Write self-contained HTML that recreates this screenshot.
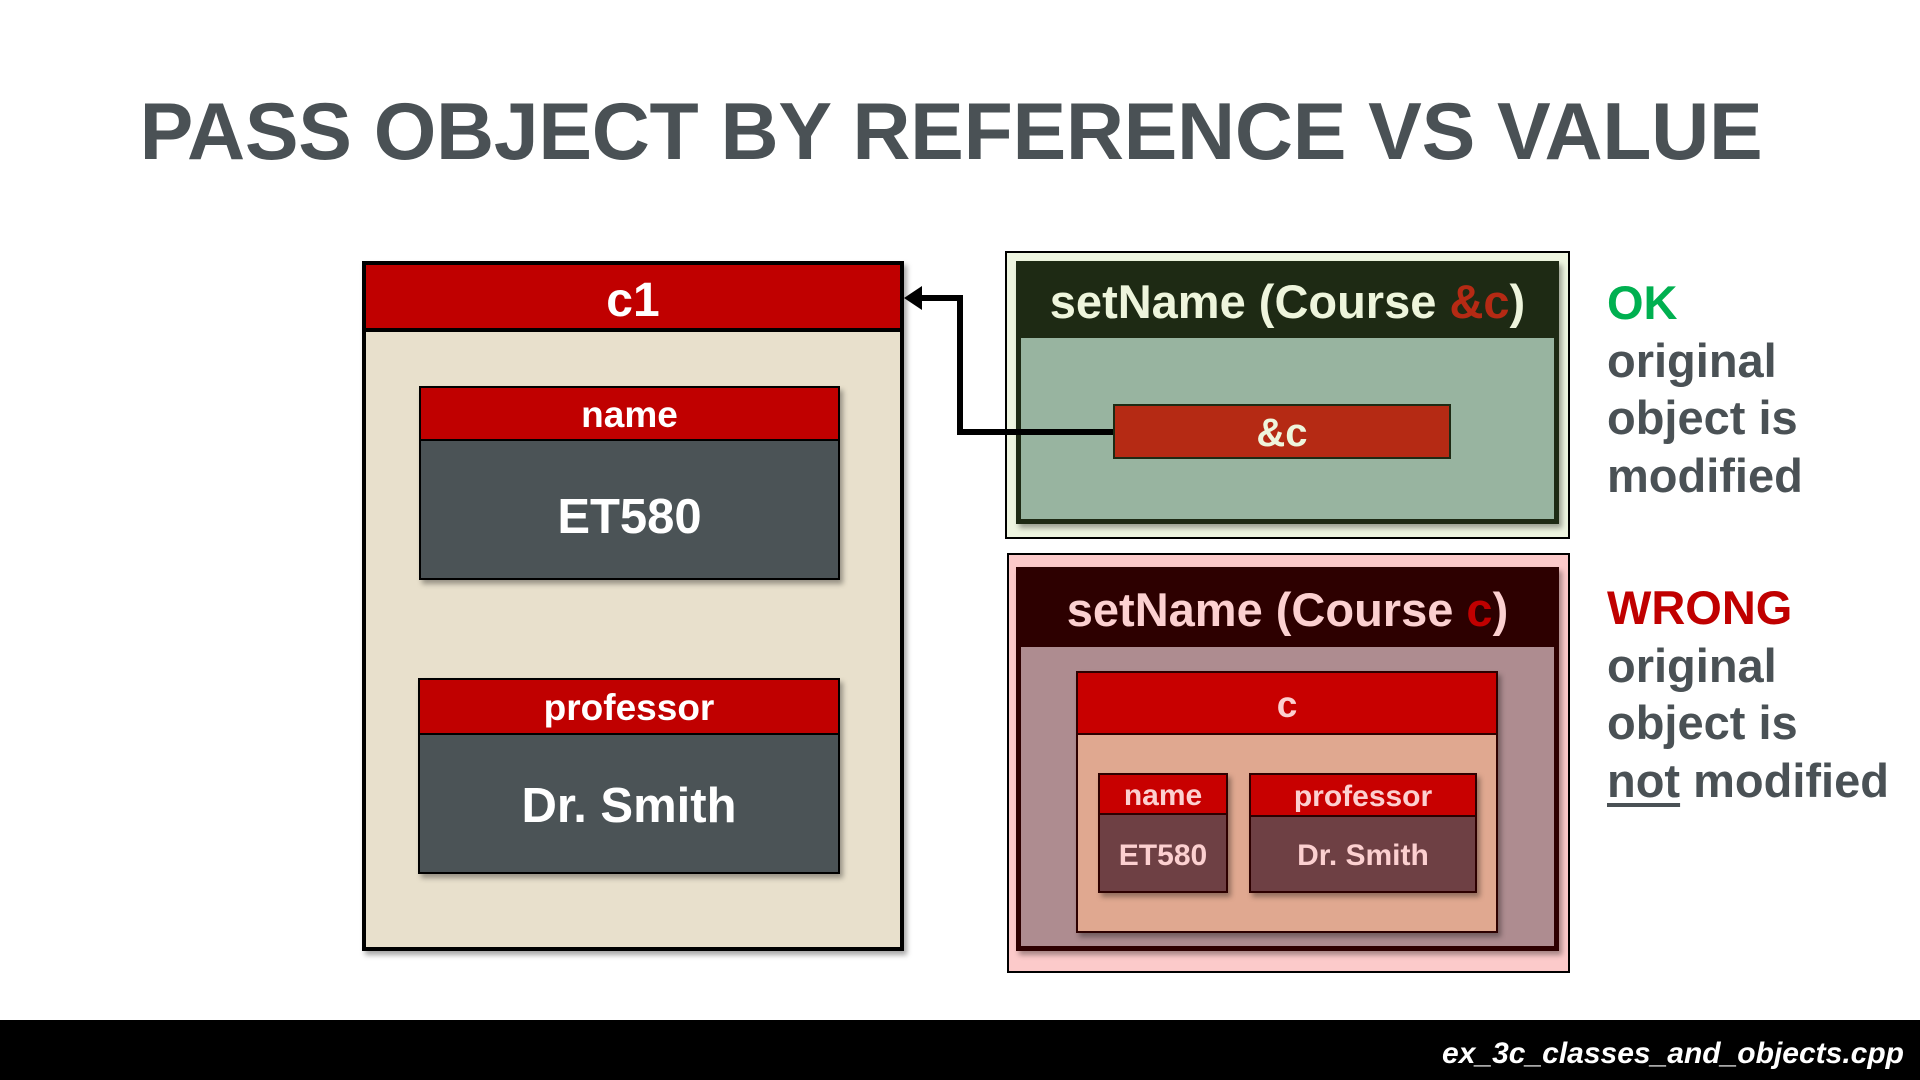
<!DOCTYPE html>
<html><head><meta charset="utf-8"><style>
*{margin:0;padding:0;box-sizing:border-box}
body{width:1920px;height:1080px;background:#fff;position:relative;overflow:hidden;font-family:"Liberation Sans",Arial,sans-serif;font-weight:bold}
.a{position:absolute}
.c{display:flex;align-items:center;justify-content:center;text-align:center}
.title{left:-9px;width:1920px;top:86px;font-size:80.5px;color:#4a5155;text-align:center;letter-spacing:-0.3px}
.sh{box-shadow:3px 4px 5px rgba(0,0,0,.35)}
</style></head><body>
<div class="a title">PASS OBJECT BY REFERENCE VS VALUE</div>

<!-- c1 -->
<div class="a sh" style="left:362px;top:261px;width:542px;height:690px;background:#e8e0cc;border:4px solid #000"></div>
<div class="a c" style="left:366px;top:265px;width:534px;height:67px;background:#c00000;border-bottom:4px solid #000;color:#fff;font-size:48px;padding-top:8px">c1</div>

<div class="a sh" style="left:419px;top:386px;width:421px;height:194px;background:#4b5356;border:2px solid #000"></div>
<div class="a c" style="left:421px;top:388px;width:417px;height:53px;background:#c00000;border-bottom:2px solid #000;color:#fff;font-size:37px;padding-top:3px">name</div>
<div class="a c" style="left:421px;top:441px;width:417px;height:137px;color:#fff;font-size:49px;padding-top:14px">ET580</div>

<div class="a sh" style="left:418px;top:678px;width:422px;height:196px;background:#4b5356;border:2px solid #000"></div>
<div class="a c" style="left:420px;top:680px;width:418px;height:55px;background:#c00000;border-bottom:2px solid #000;color:#fff;font-size:37px;padding-top:3px">professor</div>
<div class="a c" style="left:420px;top:735px;width:418px;height:137px;color:#fff;font-size:49px;padding-top:5px">Dr. Smith</div>

<!-- green -->
<div class="a" style="left:1005px;top:251px;width:565px;height:288px;background:#eef5e0;border:2px solid #000"></div>
<div class="a sh" style="left:1016px;top:261px;width:543px;height:263px;background:#98b4a0;border:5px solid #1e2a14"></div>
<div class="a c" style="left:1016px;top:261px;width:543px;height:77px;background:#1e2a14;color:#eef5dc;font-size:47px;padding-top:4px">setName (Course&nbsp;<span style="color:#b52a14">&amp;c</span>)</div>

<svg class="a" style="left:0;top:0" width="1920" height="1080">
<polyline points="1113,432 960,432 960,298 912,298" fill="none" stroke="#000" stroke-width="6"/>
<polygon points="904,298 922,286 922,310" fill="#000"/>
</svg>
<div class="a c" style="left:1113px;top:404px;width:338px;height:55px;background:#b52a14;border:2px solid #1e2a14;color:#eef5dc;font-size:40px;padding-top:3px">&amp;c</div>

<!-- pink -->
<div class="a" style="left:1007px;top:553px;width:563px;height:420px;background:#fccaca;border:2px solid #000"></div>
<div class="a sh" style="left:1016px;top:567px;width:543px;height:384px;background:#ae8c90;border:5px solid #2d0000"></div>
<div class="a c" style="left:1016px;top:567px;width:543px;height:80px;background:#2d0000;color:#fcd0d0;font-size:47px;padding-top:4px">setName (Course&nbsp;<span style="color:#c00000">c</span>)</div>

<div class="a sh" style="left:1076px;top:671px;width:422px;height:262px;background:#e0a890;border:2px solid #2d0000"></div>
<div class="a c" style="left:1078px;top:673px;width:418px;height:62px;background:#c80000;border-bottom:2px solid #2d0000;color:#fcd0d0;font-size:37px;padding-top:3px">c</div>

<div class="a sh" style="left:1098px;top:773px;width:130px;height:120px;background:#6e4044;border:2px solid #2d0000"></div>
<div class="a c" style="left:1100px;top:775px;width:126px;height:40px;background:#c80000;border-bottom:2px solid #2d0000;color:#fcd0d0;font-size:30px;padding-top:3px">name</div>
<div class="a c" style="left:1100px;top:815px;width:126px;height:76px;color:#fcd0d0;font-size:30px;padding-top:6px">ET580</div>

<div class="a sh" style="left:1249px;top:773px;width:228px;height:120px;background:#6e4044;border:2px solid #2d0000"></div>
<div class="a c" style="left:1251px;top:775px;width:224px;height:42px;background:#c80000;border-bottom:2px solid #2d0000;color:#fcd0d0;font-size:30px;padding-top:3px">professor</div>
<div class="a c" style="left:1251px;top:817px;width:224px;height:74px;color:#fcd0d0;font-size:30px;padding-top:4px">Dr. Smith</div>

<!-- right text -->
<div class="a" style="left:1607px;top:274px;font-size:47px;line-height:57.5px;color:#4a5155">
<div style="color:#00b050">OK</div><div>original</div><div>object is</div><div>modified</div></div>
<div class="a" style="left:1607px;top:579px;font-size:47px;line-height:57.5px;color:#4a5155">
<div style="color:#c00000">WRONG</div><div>original</div><div>object is</div><div><u style="text-decoration-thickness:4px;text-underline-offset:6px">not</u> modified</div></div>

<div class="a" style="left:0;top:1020px;width:1920px;height:60px;background:#000"></div>
<div class="a" style="right:16px;top:1037px;font-size:30px;font-style:italic;color:#fff">ex_3c_classes_and_objects.cpp</div>
</body></html>
